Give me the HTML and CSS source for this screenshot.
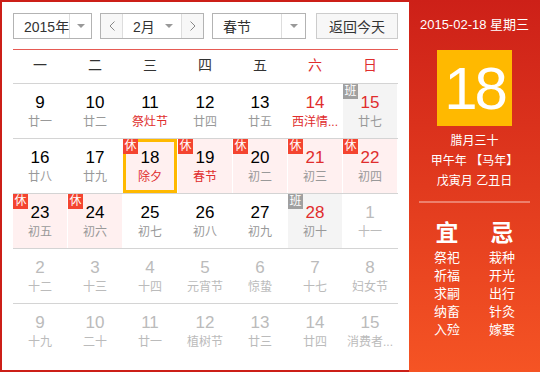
FILE: index.html
```html
<!DOCTYPE html>
<html lang="zh-CN">
<head>
  <meta charset="UTF-8">
  <meta name="viewport" content="width=device-width, initial-scale=1.0">
  <title>万年历</title>
  <link rel="stylesheet" href="styles.css">
</head>
<body>
  <div class="calendar">
    <div class="main">
      <!-- Controls -->
      <div class="controls">
        <div class="select select-year">
          <span class="select-text">2015年</span>
          <span class="select-arrow"><i class="caret"></i></span>
        </div>
        <div class="select select-month">
          <span class="nav-btn">
            <svg width="6" height="10" viewBox="0 0 6 10"><polyline points="5.5,0.5 1,5 5.5,9.5" fill="none" stroke="#888" stroke-width="1"/></svg>
          </span>
          <span class="select-text">2月</span>
          <span class="month-caret"><i class="caret"></i></span>
          <span class="nav-btn nav-next">
            <svg width="6" height="10" viewBox="0 0 6 10"><polyline points="0.5,0.5 5,5 0.5,9.5" fill="none" stroke="#888" stroke-width="1"/></svg>
          </span>
        </div>
        <div class="select select-holiday">
          <span class="select-text">春节</span>
          <span class="select-arrow"><i class="caret"></i></span>
        </div>
        <button class="btn-today">返回今天</button>
      </div>

      <!-- Week header -->
      <div class="week">
        <span>一</span><span>二</span><span>三</span><span>四</span><span>五</span>
        <span class="weekend">六</span><span class="weekend">日</span>
      </div>

      <!-- Days -->
      <div class="days">
        <div class="row">
          <div class="day"><span class="num">9</span><span class="lunar">廿一</span></div>
          <div class="day"><span class="num">10</span><span class="lunar">廿二</span></div>
          <div class="day"><span class="num">11</span><span class="lunar fest">祭灶节</span></div>
          <div class="day"><span class="num">12</span><span class="lunar">廿四</span></div>
          <div class="day"><span class="num">13</span><span class="lunar">廿五</span></div>
          <div class="day weekend"><span class="num">14</span><span class="lunar fest">西洋情...</span></div>
          <div class="day weekend work"><i class="badge">班</i><span class="num">15</span><span class="lunar">廿七</span></div>
        </div>
        <div class="row">
          <div class="day"><span class="num">16</span><span class="lunar">廿八</span></div>
          <div class="day"><span class="num">17</span><span class="lunar">廿九</span></div>
          <div class="day rest selected"><i class="badge">休</i><span class="num">18</span><span class="lunar fest">除夕</span></div>
          <div class="day rest"><i class="badge">休</i><span class="num">19</span><span class="lunar fest">春节</span></div>
          <div class="day rest"><i class="badge">休</i><span class="num">20</span><span class="lunar">初二</span></div>
          <div class="day weekend rest"><i class="badge">休</i><span class="num">21</span><span class="lunar">初三</span></div>
          <div class="day weekend rest"><i class="badge">休</i><span class="num">22</span><span class="lunar">初四</span></div>
        </div>
        <div class="row">
          <div class="day rest"><i class="badge">休</i><span class="num">23</span><span class="lunar">初五</span></div>
          <div class="day rest"><i class="badge">休</i><span class="num">24</span><span class="lunar">初六</span></div>
          <div class="day"><span class="num">25</span><span class="lunar">初七</span></div>
          <div class="day"><span class="num">26</span><span class="lunar">初八</span></div>
          <div class="day"><span class="num">27</span><span class="lunar">初九</span></div>
          <div class="day weekend work"><i class="badge">班</i><span class="num">28</span><span class="lunar">初十</span></div>
          <div class="day other"><span class="num">1</span><span class="lunar">十一</span></div>
        </div>
        <div class="row">
          <div class="day other"><span class="num">2</span><span class="lunar">十二</span></div>
          <div class="day other"><span class="num">3</span><span class="lunar">十三</span></div>
          <div class="day other"><span class="num">4</span><span class="lunar">十四</span></div>
          <div class="day other"><span class="num">5</span><span class="lunar">元宵节</span></div>
          <div class="day other"><span class="num">6</span><span class="lunar">惊蛰</span></div>
          <div class="day other"><span class="num">7</span><span class="lunar">十七</span></div>
          <div class="day other"><span class="num">8</span><span class="lunar">妇女节</span></div>
        </div>
        <div class="row">
          <div class="day other"><span class="num">9</span><span class="lunar">十九</span></div>
          <div class="day other"><span class="num">10</span><span class="lunar">二十</span></div>
          <div class="day other"><span class="num">11</span><span class="lunar">廿一</span></div>
          <div class="day other"><span class="num">12</span><span class="lunar">植树节</span></div>
          <div class="day other"><span class="num">13</span><span class="lunar">廿三</span></div>
          <div class="day other"><span class="num">14</span><span class="lunar">廿四</span></div>
          <div class="day other"><span class="num">15</span><span class="lunar">消费者...</span></div>
        </div>
      </div>
    </div>

    <!-- Day detail -->
    <div class="side">
      <div class="side-date">2015-02-18 星期三</div>
      <div class="side-day">18</div>
      <div class="side-lunar">
        <div>腊月三十</div>
        <div>甲午年 【马年】</div>
        <div>戊寅月 乙丑日</div>
      </div>
      <div class="side-line"></div>
      <div class="almanac">
        <div class="almanac-col">
          <div class="almanac-title">宜</div>
          <div>祭祀</div>
          <div>祈福</div>
          <div>求嗣</div>
          <div>纳畜</div>
          <div>入殓</div>
        </div>
        <div class="almanac-col">
          <div class="almanac-title">忌</div>
          <div>栽种</div>
          <div>开光</div>
          <div>出行</div>
          <div>针灸</div>
          <div>嫁娶</div>
        </div>
      </div>
    </div>
  </div>
</body>
</html>
```

FILE: styles.css
```css
/* Global */
body {
  margin: 0;
  font-family: "Liberation Sans", "Noto Sans CJK SC", sans-serif;
  color: #333;
}

.calendar {
  display: flex;
  width: 540px;
  height: 372px;
}

/* Left part */
.main {
  box-sizing: border-box;
  width: 409px;
  height: 372px;
  padding: 11px 11px 0 11px;
  border: 2px solid #cc1f18;
  border-right: none;
}

/* Controls */
.controls {
  display: flex;
  height: 26px;
  margin-bottom: 10px;
}

.select {
  box-sizing: border-box;
  display: flex;
  align-items: center;
  height: 26px;
  border: 1px solid #b3b3b3;
  background: #fff;
  font-size: 14px;
  color: #333;
}

.select-year { width: 79px; margin-right: 8px; }
.select-month { width: 104px; margin-right: 8px; }
.select-holiday { width: 94px; margin-right: 10px; }

.select-text {
  flex: 1;
  padding-left: 10px;
  white-space: nowrap;
}

.select-arrow {
  display: flex;
  align-items: center;
  justify-content: center;
  width: 24px;
  height: 100%;
  border-left: 1px solid #ddd;
}

.select-holiday .select-arrow { width: 23px; }

.month-caret {
  display: flex;
  align-items: center;
  padding-right: 8px;
}

.caret {
  display: block;
  width: 0;
  height: 0;
  border-left: 4px solid transparent;
  border-right: 4px solid transparent;
  border-top: 4px solid #999;
}

.nav-btn {
  display: flex;
  align-items: center;
  justify-content: center;
  width: 21px;
  height: 100%;
  background: #f7f7f7;
  border-right: 1px solid #ddd;
}

.nav-next {
  border-right: none;
  border-left: 1px solid #ddd;
}

.btn-today {
  box-sizing: border-box;
  width: 82px;
  height: 26px;
  padding: 0;
  border: 1px solid #ccc;
  background: #f7f7f7;
  font-family: inherit;
  font-size: 14px;
  color: #333;
}

/* Week header */
.week {
  display: grid;
  grid-template-columns: repeat(7, 54px);
  column-gap: 1px;
  height: 33px;
  line-height: 31px;
  border-top: 1px solid #e65a53;
  border-bottom: 1px solid #d4d4d4;
  font-size: 14px;
  text-align: center;
  color: #333;
}

.week .weekend { color: #e02d2d; }

/* Day cells */
.row {
  display: grid;
  grid-template-columns: repeat(7, 54px);
  column-gap: 1px;
  border-bottom: 1px solid #d4d4d4;
}

.row:last-child { border-bottom: none; }

.day {
  position: relative;
  box-sizing: border-box;
  height: 54px;
  padding-top: 9px;
  text-align: center;
}

.num {
  display: block;
  font-size: 17px;
  line-height: 20px;
  color: #000;
}

.lunar {
  display: block;
  white-space: nowrap;
  font-size: 12px;
  line-height: 18px;
  color: #999;
}

.lunar.fest { color: #e02d2d; }
.weekend .num { color: #e02d2d; }

.rest { background: #fff0f0; }
.work { background: #f4f4f4; }

.other .num,
.other .lunar { color: #bbb; }

.selected::after {
  content: "";
  position: absolute;
  inset: 0;
  border: 3px solid #ffb900;
}

.badge {
  position: absolute;
  top: 0;
  left: 0;
  z-index: 2;
  width: 15px;
  height: 15px;
  font-style: normal;
  font-size: 12px;
  line-height: 15px;
  text-align: center;
  color: #fff;
  background: #f44430;
}

.work .badge { background: #a0a0a0; }

/* Right panel */
.side {
  width: 131px;
  height: 372px;
  background: linear-gradient(#cd2018, #f55424);
  color: #fff;
  text-align: center;
}

.side-date {
  padding-top: 17px;
  font-size: 13px;
  line-height: 16px;
}

.side-day {
  width: 75px;
  height: 76px;
  margin: 17px auto 0;
  background: #ffb900;
  font-size: 60px;
  line-height: 78px;
  letter-spacing: -3px;
}

.side-lunar {
  margin-top: 5px;
  font-size: 12px;
  line-height: 20px;
}

.side-line {
  height: 2px;
  margin: 10px 10px 0 10px;
  background: rgba(255, 255, 255, 0.35);
}

.almanac {
  display: flex;
  justify-content: center;
  gap: 15px;
  margin-top: 15px;
  font-size: 13px;
  line-height: 18px;
}

.almanac-col { width: 40px; }

.almanac-title {
  font-size: 23px;
  font-weight: bold;
  line-height: 30px;
  margin-bottom: 1px;
}
```
